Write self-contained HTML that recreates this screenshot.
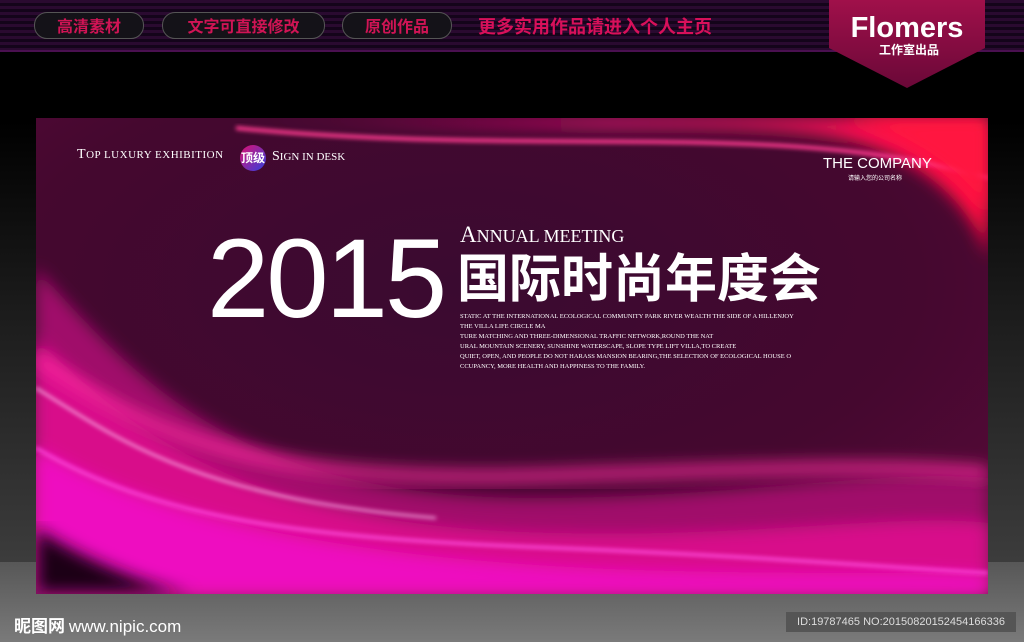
<!DOCTYPE html>
<html><head><meta charset="utf-8"><style>
*{margin:0;padding:0}
body{width:1024px;height:642px;overflow:hidden;position:relative;font-family:"Liberation Sans","Noto Sans CJK SC",sans-serif;background:linear-gradient(#000 0,#000 120px,#1a1a1a 300px,#3c3c3c 562px,#575757 562px,#7a7a7a 642px)}
.top{position:absolute;left:0;top:0;width:1024px;height:50px;background:repeating-linear-gradient(#2a0a30 0,#2a0a30 3px,#14041a 3px,#14041a 6px);border-bottom:2px solid #4a1050}
.pill{position:absolute;top:12px;height:25px;border:1px solid #555;border-radius:13px;background:#141218;color:#d01455;font-size:16px;line-height:25px;text-align:center;font-family:"Noto Sans CJK SC",sans-serif;font-weight:bold}
.more{position:absolute;left:478px;top:13px;color:#d8105a;font-size:18px;font-weight:bold;font-family:"Noto Sans CJK SC",sans-serif}
.logo{position:absolute;left:827px;top:0;width:160px;height:90px}
.banner{position:absolute;left:36px;top:118px;width:952px;height:476px;overflow:hidden}
.t{position:absolute;color:#fff;font-family:"Liberation Serif",serif}
</style></head><body>
<div class="top"></div>
<div class="pill" style="left:34px;width:108px">高清素材</div>
<div class="pill" style="left:162px;width:161px">文字可直接修改</div>
<div class="pill" style="left:342px;width:108px">原创作品</div>
<div class="more">更多实用作品请进入个人主页</div>
<svg class="logo" viewBox="0 0 160 90"><defs><linearGradient id="lg" x1="0" y1="0" x2="0" y2="1"><stop offset="0" stop-color="#a0104a"/><stop offset="1" stop-color="#6a0838"/></linearGradient></defs><path d="M2 0H158V48L80 88L2 48Z" fill="url(#lg)"/>
<text x="80" y="37" fill="#fff" font-size="29" font-weight="bold" text-anchor="middle" font-family="Liberation Sans">Flomers</text>
<text x="82" y="54" fill="#fff" font-size="12" font-weight="bold" text-anchor="middle" font-family="Noto Sans CJK SC">工作室出品</text></svg>
<div class="banner">
<svg width="952" height="476" viewBox="0 0 952 476">
<defs>
<radialGradient id="bg" cx="0.45" cy="0.35" r="0.8"><stop offset="0" stop-color="#3a0a30"/><stop offset="0.6" stop-color="#45082f"/><stop offset="1" stop-color="#5a0a3a"/></radialGradient>
<filter id="b1"><feGaussianBlur stdDeviation="8"/></filter>
<filter id="b2"><feGaussianBlur stdDeviation="2"/></filter>
<linearGradient id="tr" x1="0" y1="0" x2="1" y2="0"><stop offset="0" stop-color="#c01060" stop-opacity="0"/><stop offset="0.5" stop-color="#e01470"/><stop offset="1" stop-color="#ff1040"/></linearGradient>
</defs>
<rect width="952" height="476" fill="url(#bg)"/>
<path d="M0 150C100 260 200 380 500 380C700 380 850 350 952 360V476H0Z" fill="#a00a6a" filter="url(#b1)"/>
<path d="M0 220C100 320 220 410 520 415C720 420 860 395 952 405V476H0Z" fill="#d8108a" filter="url(#b1)"/>
<path d="M0 330C150 420 400 445 600 452C800 458 900 452 952 458V476H0Z" fill="#ee10c0" filter="url(#b1)"/>
<path d="M0 410C60 450 140 476 160 476H0Z" fill="#1a0418" filter="url(#b1)"/>
<path d="M0 240C120 320 220 365 500 358C700 352 850 345 952 355" stroke="#ff2aa0" stroke-width="10" fill="none" filter="url(#b1)"/>
<path d="M0 270C80 320 160 380 400 400" stroke="#ffc0f0" stroke-width="2" fill="none" filter="url(#b2)"/>
<path d="M0 330C120 400 260 420 520 430C720 438 860 450 952 455" stroke="#ff50e0" stroke-width="3" fill="none" filter="url(#b2)"/>
<path d="M200 0C500 20 700 0 800 20C900 40 940 100 952 140V0Z" fill="url(#tr)" filter="url(#b1)"/>
<path d="M200 10C500 40 750 0 952 60" stroke="#ff3a90" stroke-width="4" fill="none" filter="url(#b2)"/>
<path d="M800 0C880 20 930 60 952 100V0Z" fill="#ff1840" filter="url(#b1)"/>
</svg>
<div class="t" style="left:41px;top:29px;font-size:14px;letter-spacing:0.5px">T<span style="font-size:11px">OP LUXURY EXHIBITION</span></div>
<div style="position:absolute;left:204px;top:27px;width:26px;height:26px;border-radius:50%;background:linear-gradient(135deg,#e01070,#3040e0);color:#fff;font-size:12px;line-height:26px;text-align:center;font-family:'Noto Sans CJK SC',sans-serif;font-weight:bold">顶级</div>
<div class="t" style="left:236px;top:31px;font-size:14px">S<span style="font-size:11px">IGN IN DESK</span></div>
<div style="position:absolute;left:787px;top:37px;color:#fff;font-size:15px">THE COMPANY</div>
<div style="position:absolute;left:812px;top:55px;color:#fff;font-size:6px;font-family:'Noto Sans CJK SC',sans-serif">请输入您的公司名称</div>
<div style="position:absolute;left:171px;top:99px;color:#fff;font-size:112px;line-height:124px;font-family:'Liberation Sans',sans-serif;letter-spacing:-3px">2015</div>
<div class="t" style="left:424px;top:104px;font-size:23px">A<span style="font-size:18px">NNUAL MEETING</span></div>
<div style="position:absolute;left:421px;top:126px;color:#fff;font-size:52px;line-height:62px;font-weight:bold;font-family:'Noto Sans CJK SC',sans-serif">国际时尚年度会</div>
<div class="t" style="left:424px;top:194px;font-size:6.5px;line-height:10px">STATIC AT THE INTERNATIONAL ECOLOGICAL COMMUNITY PARK RIVER WEALTH THE SIDE OF A HILLENJOY<br>THE VILLA LIFE CIRCLE MA<br>TURE MATCHING AND THREE-DIMENSIONAL TRAFFIC NETWORK,ROUND THE NAT<br>URAL MOUNTAIN SCENERY, SUNSHINE WATERSCAPE, SLOPE TYPE LIFT VILLA,TO CREATE<br>QUIET, OPEN, AND PEOPLE DO NOT HARASS MANSION BEARING,THE SELECTION OF ECOLOGICAL HOUSE O<br>CCUPANCY, MORE HEALTH AND HAPPINESS TO THE FAMILY.</div>
</div>
<div style="position:absolute;left:14px;top:612px;color:#fff;font-size:17px;font-weight:bold;font-family:'Noto Sans CJK SC',sans-serif">昵图网 <span style="font-family:'Liberation Sans';font-weight:normal">www.nipic.com</span></div>
<div style="position:absolute;left:786px;top:612px;width:230px;height:20px;background:#555;color:#ddd;font-size:11px;line-height:20px;text-align:center">ID:19787465 NO:20150820152454166336</div>
</body></html>
